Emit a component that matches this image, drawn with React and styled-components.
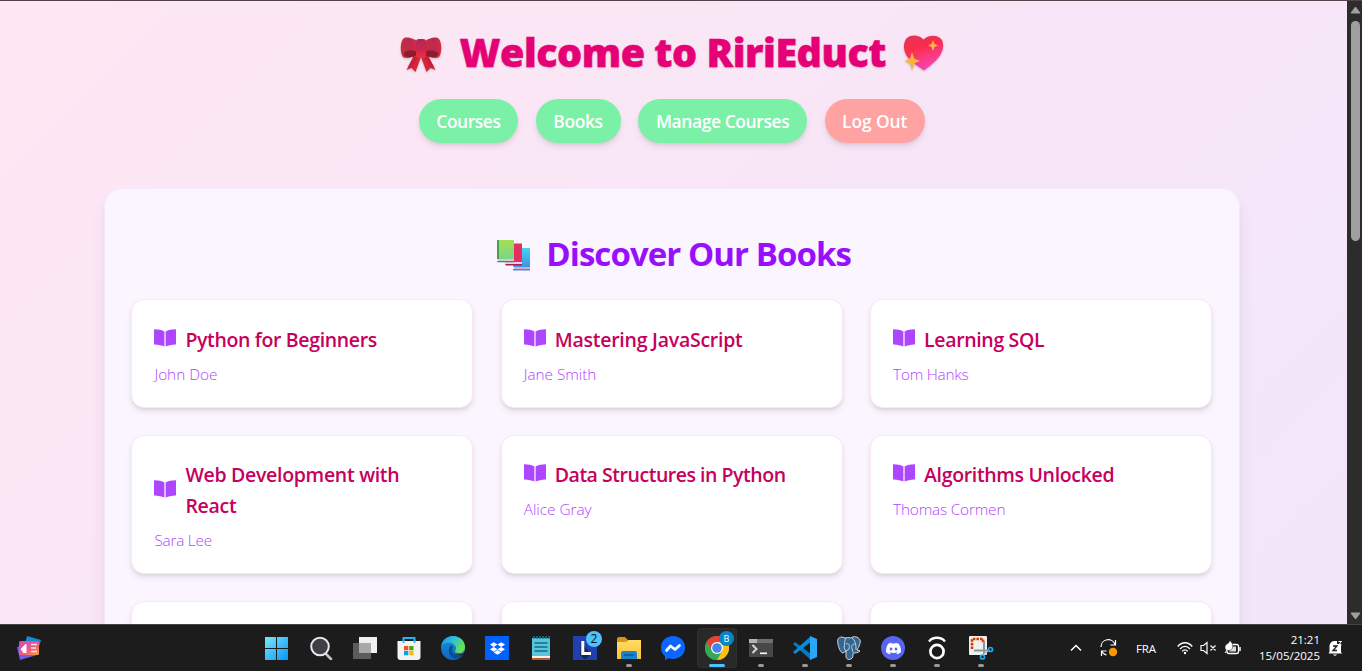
import React from "react";
import styled, { createGlobalStyle, css } from "styled-components";
import { SiDropbox, SiDiscord } from "react-icons/si";

const GlobalStyle = createGlobalStyle`
  * { box-sizing: border-box; }
  html, body { margin: 0; height: 100%; overflow: hidden; }
  body { font-family: "Open Sans", "Noto Sans", sans-serif; }
  svg { display: block; flex: none; }
`;

const Screen = styled.div`
  display: flex;
  flex-direction: column;
  width: 1362px;
  height: 671px;
  overflow: hidden;
`;

const Browser = styled.div`
  display: flex;
  height: 624px;
  flex: none;
  border-top: 1px solid #53434b;
`;

const Page = styled.main`
  width: 1347px;
  height: 623px;
  overflow: hidden;
  background: linear-gradient(135deg, #fee7f2 0%, #f9e6f6 40%, #f7e6f8 60%, #f2e6fb 100%);
`;

const Scrollbar = styled.div`
  width: 15px;
  display: flex;
  flex-direction: column;
  align-items: center;
  justify-content: space-between;
  padding: 5px 0 4px 2px;
  background: #2c2c2c;
`;

const Thumb = styled.div`
  width: 9px;
  height: 220px;
  margin: 7px 0 auto;
  border-radius: 5px;
  background: #9f9f9f;
`;

const Title = styled.h1`
  display: flex;
  align-items: center;
  justify-content: center;
  height: 44px;
  margin: 29px 4px 25px 0;
  font-size: 39.5px;
  line-height: 44px;
  font-weight: 800;
  letter-spacing: ${(p) => p.$tracking}px;
  color: #e60076;
  white-space: nowrap;
  -webkit-text-stroke: 0.4px #e60076;
  span {
    width: 426px;
    margin: 0 16px 0 18px;
    text-shadow: 0 1px 2px rgba(0, 0, 0, 0.2);
  }
`;

const Nav = styled.nav`
  display: flex;
  justify-content: center;
  gap: 17.6px;
  margin-right: 3.4px;
`;

const Pill = styled.button`
  width: ${(p) => p.$width}px;
  height: 44px;
  padding: 0;
  border: 0;
  border-radius: 22px;
  font: 600 17.4px/26px "Open Sans", sans-serif;
  letter-spacing: ${(p) => p.$tracking}px;
  white-space: nowrap;
  color: #fff;
  background: ${(p) => (p.$danger ? "#ffa2a2" : "#7bf1a8")};
  box-shadow: 0 4px 7px -1px rgba(0, 0, 0, 0.1), 0 2px 4px -2px rgba(0, 0, 0, 0.1);
`;

const Panel = styled.section`
  width: 1135.5px;
  height: 700px;
  margin: 44.5px 0 0 104px;
  padding: 45.6px 26.4px 0;
  border: 1px solid #f3e8ff;
  border-radius: 18px;
  background: #faf5ff;
  box-shadow: 0 11px 17px -3px rgba(0, 0, 0, 0.1), 0 4px 7px -4px rgba(0, 0, 0, 0.1);
`;

const Heading = styled.h2`
  display: flex;
  align-items: center;
  justify-content: center;
  gap: 15px;
  height: 40px;
  margin: 0 0 25px;
  padding-left: 6px;
  font-size: 33px;
  line-height: 40px;
  font-weight: 700;
  letter-spacing: -0.93px;
  color: #9810fa;
  white-space: nowrap;
  svg { margin-top: 3px; }
  span { width: 307px; }
`;

const Grid = styled.div`
  display: grid;
  grid-template-columns: repeat(3, 1fr);
  grid-template-rows: 108.5px 139px 138.5px;
  gap: 27.1px 27.3px;
`;

const Card = styled.article`
  padding: 23.6px 22px 22px;
  border: 1px solid #fce7f3;
  border-radius: 13px;
  background: #fff;
  box-shadow: 0 4px 7px -1px rgba(0, 0, 0, 0.1), 0 2px 4px -2px rgba(0, 0, 0, 0.12);
`;

const CardTitle = styled.h3`
  display: flex;
  align-items: center;
  gap: 9px;
  margin: 0 0 9px;
  font-size: 19.5px;
  line-height: 31px;
  font-weight: 600;
  letter-spacing: ${(p) => p.$tracking}px;
  color: #c6005c;
  svg { color: #ad46ff; margin-top: -3px; }
`;

const Author = styled.p`
  margin: 0;
  font-size: 15.4px;
  line-height: 22px;
  font-weight: 350;
  letter-spacing: ${(p) => p.$tracking}px;
  color: #ad46ff;
`;

const Taskbar = styled.footer`
  display: flex;
  align-items: center;
  height: 47px;
  flex: none;
  border-top: 1px solid #454545;
  background: #1c1c1c;
  color: #fff;
`;

const Widgets = styled.div`
  width: 255px;
  padding-left: 17px;
`;

const Apps = styled.div`
  display: flex;
  width: 748px;
`;

const AppSlot = styled.div`
  position: relative;
  display: flex;
  align-items: center;
  justify-content: center;
  width: 40px;
  height: 40px;
  margin: 0 2px;
  border-radius: 4px;
  ${(p) => p.$active && css`background: #292929; box-shadow: 0 0 0 1px #303030 inset;`}
`;

const Running = styled.i`
  position: absolute;
  bottom: 1px;
  left: 50%;
  width: ${(p) => (p.$active ? 16 : 6)}px;
  height: 3px;
  border-radius: 2px;
  transform: translateX(-50%);
  background: ${(p) => (p.$active ? "#4cc2ff" : "#9a9a9a")};
`;

const Badge = styled.b`
  position: absolute;
  top: ${(p) => p.$top}px;
  right: ${(p) => p.$right}px;
  width: ${(p) => p.$size}px;
  height: ${(p) => p.$size}px;
  border-radius: 50%;
  font-size: ${(p) => p.$font}px;
  line-height: ${(p) => p.$size}px;
  font-weight: 500;
  text-align: center;
  color: ${(p) => p.$color};
  background: ${(p) => p.$bg};
`;

const Tile = styled.div`
  display: flex;
  align-items: center;
  justify-content: center;
  width: 24px;
  height: 24px;
  border-radius: ${(p) => (p.$round ? "50%" : "0")};
  background: ${(p) => p.$bg};
  color: #fff;
`;

const Tray = styled.div`
  display: flex;
  align-items: center;
  margin-left: auto;
  padding-right: 19px;
`;

const Language = styled.span`
  width: 23px;
  margin: 1px 18px 0 18px;
  font-size: 11.5px;
  letter-spacing: -0.1px;
`;

const Status = styled.div`
  display: flex;
  align-items: center;
  gap: 7px;
  margin-right: 13px;
`;

const Clock = styled.div`
  width: 66px;
  margin-right: 8px;
  font-size: 11.5px;
  line-height: 16px;
  letter-spacing: ${(p) => p.$tracking}px;
  text-align: right;
  white-space: nowrap;
`;

const BookIcon = () => (
  <svg width="22" height="18" viewBox="0 0 22 18" fill="currentColor">
    <path d="M0 .8Q0 .3.6.3C4.500.3 8 1.200 10.400 2.500V17.600C7.500 16.400 4.500 15.700.6 15.500Q0 15.400 0 14.900Z" />
    <path d="M22 .8Q22 .3 21.400.3C17.500.3 14 1.200 11.600 2.500V17.600C14.500 16.400 17.500 15.700 21.400 15.500Q22 15.400 22 14.900Z" />
  </svg>
);

const Bow = () => (
  <svg width="42" height="42" viewBox="0 0 42 42" style={{ filter: "drop-shadow(0 1px 1px rgba(0,0,0,.2))" }}>
    <defs>
      <linearGradient id="bowL" x1="0" x2="1"><stop stopColor="#d02a3b" /><stop offset=".5" stopColor="#b92b50" /><stop offset="1" stopColor="#d8293f" /></linearGradient>
      <linearGradient id="bowK" x1="0" x2="0" y1="0" y2="1"><stop stopColor="#b02856" /><stop offset=".55" stopColor="#c9264e" /><stop offset="1" stopColor="#f5303c" /></linearGradient>
    </defs>
    <path d="M14 24 6.500 39l5-2 4 4 5.500-15 5.500 15 4-4 5 2L28 24Z" fill="#dc2439" />
    <path d="M14 26 8 36l4 0 6-10Zm14 0 6 10-4 0-6-10Z" fill="#c3203b" />
    <path d="M3 8c3-3 9-1 14 2v13c-5 4-11 5-14 3-3-4-3-14 0-18Z" fill="url(#bowL)" />
    <path d="M39 8c-3-3-9-1-14 2v13c5 4 11 5 14 3 3-4 3-14 0-18Z" fill="url(#bowL)" />
    <path d="M4 22c4-3 8-3 13-1v3c-5 3-10 3-13 0Zm34 0c-4-3-8-3-13-1v3c5 3 10 3 13 0Z" fill="#8c1c2c" />
    <rect x="16" y="8" width="10" height="19" rx="3" fill="url(#bowK)" />
  </svg>
);

const Heart = () => (
  <svg width="42" height="42" viewBox="0 0 42 42" style={{ filter: "drop-shadow(0 1px 1px rgba(0,0,0,.2))" }}>
    <defs>
      <linearGradient id="hg" x1=".2" y1="0" x2=".6" y2="1"><stop stopColor="#e33557" /><stop offset=".35" stopColor="#fb2b4b" /><stop offset="1" stopColor="#f748bd" /></linearGradient>
    </defs>
    <path d="M21.500 8.500C17 3.500 8 3 4 8c-4 7-2 15 4 21 4 4 10 8 14 10.500 4-3 8-6 12-10 6-6 9-14 6-20.500C36 3 26 3.500 21.500 8.500Z" fill="url(#hg)" />
    <path d="m31 9 1.500 4 3.500 1.500-3.500 1.500-1.500 4-1.500-4-3.500-1.500 3.500-1.500Z" fill="#ffb443" />
    <path d="m10 21 2.300 6.500 5.700 2.500-5.700 2.500-2.300 7-2-7-5.500-2.500 5.500-2.500Z" fill="#ffb13d" />
  </svg>
);

const Books = () => (
  <svg width="35" height="34" viewBox="0 0 35 34">
    <defs>
      <linearGradient id="gb" x2="0" y2="1"><stop stopColor="#a4df52" /><stop offset="1" stopColor="#79d58c" /></linearGradient>
      <linearGradient id="bb" x2="0" y2="1"><stop stopColor="#45d3f8" /><stop offset="1" stopColor="#3f91dc" /></linearGradient>
    </defs>
    <path d="M17 9h17v20H19l-2-2Z" fill="url(#bb)" /><path d="M18 28h16v2H18Z" fill="#c9aede" /><path d="M17 30h17v1.500H17Z" fill="#5b86c9" />
    <path d="M9 4.500h17v20H10l-1-2Z" fill="#e52f63" /><path d="M9 23h17v2H9Z" fill="#ead0e4" /><path d="M9 25h17v1.500H10Z" fill="#b41c50" />
    <path d="M1 1h17v20H2l-1-2Z" fill="url(#gb)" /><path d="M1 1h2v19H1Z" fill="#48a04d" /><path d="M2 20h16v2H2Z" fill="#d3c9e4" /><path d="M1 22h17v1.200H2Z" fill="#378c52" />
  </svg>
);

const WidgetIcon = () => (
  <svg width="24" height="24" viewBox="0 0 24 24">
    <defs><linearGradient id="wi" x2="1" y2="1"><stop stopColor="#c54dc5" /><stop offset=".55" stopColor="#f05a81" /><stop offset="1" stopColor="#fa9b3d" /></linearGradient></defs>
    <path d="M10 0 24 4l-4 14L6 15Z" fill="#1688d8" /><path d="m0 11 17-5 3 13L3 24Z" fill="#765be7" />
    <rect x="2" y="5" width="20" height="14" rx="1.500" fill="url(#wi)" />
    <path d="m4 13 5-5v9l-1-1-1 1Z" fill="#fff" stroke="#fff" strokeLinejoin="round" />
    <path d="M14 8.500h6M14 12h5M14 15.500h6" stroke="#ffe0e6" strokeWidth="1.300" />
  </svg>
);

const WindowsIcon = () => (
  <svg width="24" height="24" viewBox="0 0 24 24">
    <defs><linearGradient id="win" x2="1" y2="1"><stop stopColor="#77e8ff" /><stop offset="1" stopColor="#0794f5" /></linearGradient></defs>
    <path d="M0 1h11v11H0ZM12 1h11v11H12ZM0 13h11v11H0ZM12 13h11v11H12Z" fill="url(#win)" />
  </svg>
);

const SearchIcon = () => (
  <svg width="24" height="24" viewBox="0 0 24 24">
    <path d="m17 18 5 5" stroke="#c4c4c9" strokeWidth="2.500" strokeLinecap="round" />
    <circle cx="11" cy="10.500" r="8.800" fill="#404044" stroke="#e7e7ea" strokeWidth="2" />
  </svg>
);

const TaskViewIcon = () => (
  <svg width="24" height="24" viewBox="0 0 24 24">
    <path d="M6 1h18v16H6Z" fill="#efefef" /><path d="M0 7h18v16H0Z" fill="#5c5c5c" /><path d="M6 7h12v10H6Z" fill="#a8a8a8" />
  </svg>
);

const StoreIcon = () => (
  <svg width="24" height="24" viewBox="0 0 24 24">
    <path d="M6.500 6V2h11v4" fill="none" stroke="#27b4ee" strokeWidth="1.800" />
    <path d="M.5 5h23v16a3 3 0 0 1-3 3h-17a3 3 0 0 1-3-3Z" fill="#f3f3f3" /><path d="M6.500 3v4M17.500 3v4" stroke="#27b4ee" strokeWidth="1.800" />
    <path d="M7 10h4.300v4.300H7Z" fill="#f25022" /><path d="M12.200 10h4.300v4.300h-4.300Z" fill="#58a500" /><path d="M7 15h4.300v4.300H7Z" fill="#00a4ef" /><path d="M12.200 15h4.300v4.300h-4.300Z" fill="#ffb900" />
  </svg>
);

const EdgeIcon = () => (
  <svg width="24" height="24" viewBox="0 0 24 24">
    <defs>
      <linearGradient id="e1" x2="1" y2=".5"><stop stopColor="#208ddb" /><stop offset=".5" stopColor="#2bc0dd" /><stop offset="1" stopColor="#6be348" /></linearGradient>
      <linearGradient id="e2" x2="0" y2="1"><stop stopColor="#1496d8" /><stop offset="1" stopColor="#0a66c2" /></linearGradient>
    </defs>
    <circle cx="12" cy="12" r="12" fill="url(#e2)" />
    <path d="M.2 10C1.500 3.500 6.500 0 12 0c7 0 12 5 12 11 0 4-3 6-6 6-2.500 0-4.500-1-4-2 2-2 1-5-1-6.500C9 5.500 3 6 .2 10Z" fill="url(#e1)" />
    <path d="M10 9c-3 3-3 9 1 12 4 3 8 1 11-2-3 1-8 1-10-2-1.500-2-1.500-4 0-6Z" fill="#114a8b" />
    <path d="M12 11c-1.500 4 1 6.500 4 7.300 3 .8 6-.2 8-2v2.200c-5 2-11 .5-12-3.500-.5-2-.5-3 0-4Z" fill="#1c1c1c" />
  </svg>
);

const NotepadIcon = () => (
  <svg width="20" height="24" viewBox="0 0 20 24">
    <path d="M1 2h18v19H1Z" fill="#58c5dc" /><path d="M1 21h18v3H1Z" fill="#b85a24" /><path d="M1 20h18v2H1Z" fill="#eef2f2" />
    <path d="M3 0v3M6 0v3M9 0v3M12 0v3M15 0v3M18 0v3" stroke="#147789" strokeWidth="1.500" />
    <path d="M4 7h12M4 11h12M4 15h12" stroke="#126c82" strokeWidth="1.500" strokeLinecap="round" />
  </svg>
);

const LIcon = () => (
  <svg width="24" height="24" viewBox="0 0 24 24">
    <path d="M0 0h24v24H0Z" fill="#2140af" /><path d="m8 6-1 13 4 4h2l5-5Z" fill="#132958" /><path d="M9.800 5v12.500H18" fill="none" stroke="#fff" strokeWidth="3" />
  </svg>
);

const FolderIcon = () => (
  <svg width="24" height="24" viewBox="0 0 24 24">
    <defs><linearGradient id="fo" x2="0" y2="1"><stop stopColor="#ffdc6b" /><stop offset="1" stopColor="#ffc22e" /></linearGradient></defs>
    <path d="M0 3q0-2 2-2h6l3 3h11v6H0Z" fill="#d89511" /><path d="M0 6h9l3-2h12v19H0Z" fill="url(#fo)" />
    <path d="M4 23v-6q0-2 2-2h12q2 0 2 2v6Z" fill="#1684ce" /><path d="M7 19h10" stroke="#0b569a" strokeWidth="1.500" />
  </svg>
);

const MessengerIcon = () => (
  <svg width="24" height="24" viewBox="0 0 24 24">
    <path d="M12 0C5 0 0 5 0 11.600c0 4 1.600 6.700 4 8.700V24l4-1.700c8 2.500 16-2.500 16-10.700C24 5 19 0 12 0Z" fill="#0a66ff" />
    <path d="m5.500 14.500 4-4.500 4.500 3.500 4.500-4" fill="none" stroke="#fff" strokeWidth="2.700" strokeLinejoin="round" strokeLinecap="round" />
  </svg>
);

const ChromeIcon = () => (
  <svg width="24" height="24" viewBox="0 0 24 24">
    <circle cx="12" cy="12" r="12" fill="#34a853" /><path d="M12 12 1.600 6A12 12 0 0 1 22.400 6Z" fill="#ea4335" /><path d="M12 6h10.400A12 12 0 0 1 12 24l5.200-9Z" fill="#fbc116" /><path d="M1.600 6 6.800 15 12 12V6Z" fill="#ea4335" /><path d="M1.600 6 6.800 15l5.200 3-2 6A12 12 0 0 1 1.600 6Z" fill="#34a853" />
    <circle cx="12" cy="12" r="6" fill="#fff" /><circle cx="12" cy="12" r="4.800" fill="#4285f4" />
  </svg>
);

const TerminalIcon = () => (
  <svg width="24" height="24" viewBox="0 0 24 24">
    <path d="M0 3h24v18H0Z" fill="#484848" /><path d="M0 3h24v4H0Z" fill="#707070" /><path d="M0 3h8v4H0Z" fill="#b4b4b4" />
    <path d="m3.500 9 4 4-4 4" fill="none" stroke="#d5d5d5" strokeWidth="2" /><path d="M11 17.300h7" stroke="#fff" strokeWidth="1.600" />
  </svg>
);

const CodeIcon = () => (
  <svg width="24" height="24" viewBox="0 0 24 24">
    <path d="m0 8 2-2 16 12v6Z" fill="#0879c9" /><path d="m0 16 2 2L18 6V0Z" fill="#078bd5" /><path d="m17 0 7 3v18l-7 3Z" fill="#29a9f4" />
  </svg>
);

const PostgresIcon = () => (
  <svg width="24" height="24" viewBox="0 0 24 24">
    <path d="M5 1C1 1 0 4 1 8c1 5 3 9 5 9l3-2v5c0 3 2 4 5 3 2-1 2-3 2-6 2 0 5 0 7-2l-3-1c2-3 4-8 3-10-2-4-7-4-9-2-3-1-5 0-6 0Z" fill="#336791" stroke="#cfd9e2" />
    <path d="M9 2C7 5 8 8 7 12l2 3M15 2c4 3 4 8 4 12M9 8c3-1 4 1 3 5l-3 2M16 16l-1-3c-1-4 1-5 3-5" fill="none" stroke="#cfd9e2" strokeWidth=".9" />
  </svg>
);

const RingIcon = () => (
  <svg width="24" height="24" viewBox="0 0 24 24" fill="none" stroke="#fff" strokeWidth="2.300">
    <circle cx="12" cy="15.500" r="6.600" strokeWidth="2.700" /><path d="M4 5.500c4-5 12-5 16 0" />
  </svg>
);

const SnipIcon = () => (
  <svg width="24" height="24" viewBox="0 0 24 24" overflow="visible">
    <rect width="18" height="19" rx="1" fill="#f0f0f0" /><path d="M3 13V3h11v4" fill="none" stroke="#d83b01" strokeWidth="2.600" strokeDasharray="2.600 1" />
    <path d="M15 5v13M5 14.500h14" stroke="#8d949a" strokeWidth="2" /><path d="m14 19 6-5" stroke="#bbb" strokeWidth="1.500" />
    <circle cx="13.500" cy="21" r="2" fill="none" stroke="#22a7ed" strokeWidth="1.700" /><circle cx="21.500" cy="13.500" r="2" fill="none" stroke="#22a7ed" strokeWidth="1.700" />
  </svg>
);

const ChevronIcon = () => (
  <svg width="12" height="8" viewBox="0 0 12 8"><path d="m1 6.500 5-5 5 5" fill="none" stroke="#fff" strokeWidth="1.500" /></svg>
);

const SyncIcon = () => (
  <svg width="18" height="18" viewBox="0 0 18 18" fill="none" stroke="#fff" strokeWidth="1.200">
    <path d="M1 8a7.200 7.200 0 0 1 14-2.500M15.500 1v5h-5M1.500 17v-5h5M1.500 12a7 7 0 0 0 5 4" /><circle cx="13" cy="13" r="4.200" fill="#ff9800" stroke="none" />
  </svg>
);

const WifiIcon = () => (
  <svg width="16" height="14" viewBox="0 0 16 14" fill="none" stroke="#fff" strokeWidth="1.300">
    <path d="M.7 5.500c4-5 10.600-5 14.600 0M3 8c3-3.500 7-3.500 10 0M5.200 10.300c1.600-2 4-2 5.600 0" /><circle cx="8" cy="12" r="1.200" fill="#fff" stroke="none" />
  </svg>
);

const MuteIcon = () => (
  <svg width="17" height="14" viewBox="0 0 17 14" fill="none" stroke="#fff" strokeWidth="1.200">
    <path d="M1 4.500h2.500L7 1.500v11L3.500 9.500H1ZM10.500 4.500l5 5M15.500 4.500l-5 5" />
  </svg>
);

const BatteryIcon = () => (
  <svg width="17" height="16" viewBox="0 0 17 16" fill="none" stroke="#fff">
    <rect x="3" y="4.500" width="11.500" height="9" rx="2" strokeWidth="1.300" /><path d="M8 6.500h4v5H5Z" fill="#ddd" stroke="none" /><path d="M16 7v4" strokeWidth="1.500" />
    <path d="M6 .5C8 3 9.500 5 8.500 8 7.500 10.500 4.500 11 2 10 .3 8 1 5 3 4q2-1 3-3.500Z" fill="#fff" stroke="#1c1c1c" strokeWidth=".5" /><path d="m1 13 2-3" />
  </svg>
);

const BellIcon = () => (
  <svg width="15" height="17" viewBox="0 0 15 17">
    <path d="M1.500 12V6a5 5 0 0 1 5-5H9v3h4v8l1 1.500H.5Z" fill="#fff" /><path d="M5 14.500h4q-2 2.500-4 0Z" fill="#fff" />
    <path d="M5 6h4l-4 4.500h4" fill="none" stroke="#1c1c1c" strokeWidth="1.300" /><path d="M10.500 1.500h3L10.500 5h3" fill="none" stroke="#fff" strokeWidth="1" />
  </svg>
);

const apps = [
  { id: "windows", icon: <WindowsIcon /> },
  { id: "search", icon: <SearchIcon /> },
  { id: "tasks", icon: <TaskViewIcon /> },
  { id: "store", icon: <StoreIcon /> },
  { id: "edge", icon: <EdgeIcon /> },
  { id: "dropbox", icon: <Tile $bg="#0061ff"><SiDropbox size={15} /></Tile> },
  { id: "notepad", icon: <NotepadIcon /> },
  { id: "l", icon: <LIcon />, badge: <Badge $top={3} $right={3} $size={16} $font={12} $color="#111" $bg="#4cc2ff">2</Badge> },
  { id: "files", icon: <FolderIcon />, running: true },
  { id: "messenger", icon: <MessengerIcon /> },
  { id: "chrome", icon: <ChromeIcon />, running: true, active: true, badge: <Badge $top={3} $right={3} $size={15} $font={9} $color="#fff" $bg="#0785c9">B</Badge> },
  { id: "terminal", icon: <TerminalIcon />, running: true },
  { id: "code", icon: <CodeIcon />, running: true },
  { id: "postgres", icon: <PostgresIcon />, running: true },
  { id: "discord", icon: <Tile $round $bg="#5865f2"><SiDiscord size={15} /></Tile>, running: true },
  { id: "ring", icon: <RingIcon />, running: true },
  { id: "snip", icon: <SnipIcon />, running: true },
];

const links = [
  { label: "Courses", width: 99, tracking: -0.42 },
  { label: "Books", width: 85, tracking: -0.35 },
  { label: "Manage Courses", width: 169, tracking: -0.38 },
  { label: "Log Out", width: 100, tracking: -0.1, danger: true },
];

const books = [
  { title: "Python for Beginners", author: "John Doe", tracking: -0.35 },
  { title: "Mastering JavaScript", author: "Jane Smith", tracking: -0.25 },
  { title: "Learning SQL", author: "Tom Hanks", tracking: -0.35, authorTracking: -0.25 },
  { title: "Web Development with React", author: "Sara Lee", authorTracking: -0.25 },
  { title: "Data Structures in Python", author: "Alice Gray", tracking: -0.47 },
  { title: "Algorithms Unlocked", author: "Thomas Cormen", tracking: -0.34, authorTracking: -0.2 },
];

export default function App() {
  return (
    <Screen>
      <GlobalStyle />
      <Browser>
        <Page>
          <Title $tracking={-0.5}><Bow /><span>Welcome to RiriEduct</span><Heart /></Title>
          <Nav>
            {links.map((l) => (
              <Pill key={l.label} $width={l.width} $tracking={l.tracking} $danger={l.danger}>{l.label}</Pill>
            ))}
          </Nav>
          <Panel>
            <Heading><Books /><span>Discover Our Books</span></Heading>
            <Grid>
              {books.map((b) => (
                <Card key={b.title}>
                  <CardTitle $tracking={b.tracking ?? -0.3}>
                    <BookIcon />
                    <span>{b.title}</span>
                  </CardTitle>
                  <Author $tracking={b.authorTracking ?? -0.05}>{b.author}</Author>
                </Card>
              ))}
              <Card /><Card /><Card />
            </Grid>
          </Panel>
        </Page>
        <Scrollbar>
          <svg width="11" height="8" viewBox="0 0 11 8"><path d="M5.500 1 10 7H1Z" fill="#9f9f9f" stroke="#9f9f9f" strokeLinejoin="round" /></svg>
          <Thumb />
          <svg width="11" height="8" viewBox="0 0 11 8"><path d="M5.500 7 10 1H1Z" fill="#9f9f9f" stroke="#9f9f9f" strokeLinejoin="round" /></svg>
        </Scrollbar>
      </Browser>
      <Taskbar>
        <Widgets><WidgetIcon /></Widgets>
        <Apps>
          {apps.map((a) => (
            <AppSlot key={a.id} $active={a.active}>
              {a.icon}
              {a.badge}
              {a.running && <Running $active={a.active} />}
            </AppSlot>
          ))}
        </Apps>
        <Tray>
          <ChevronIcon />
          <svg width="18" height="1" />
          <SyncIcon />
          <Language>FRA</Language>
          <Status><WifiIcon /><MuteIcon /><BatteryIcon /></Status>
          <Clock $tracking={0}>21:21<br />15/05/2025</Clock>
          <BellIcon />
        </Tray>
      </Taskbar>
    </Screen>
  );
}
